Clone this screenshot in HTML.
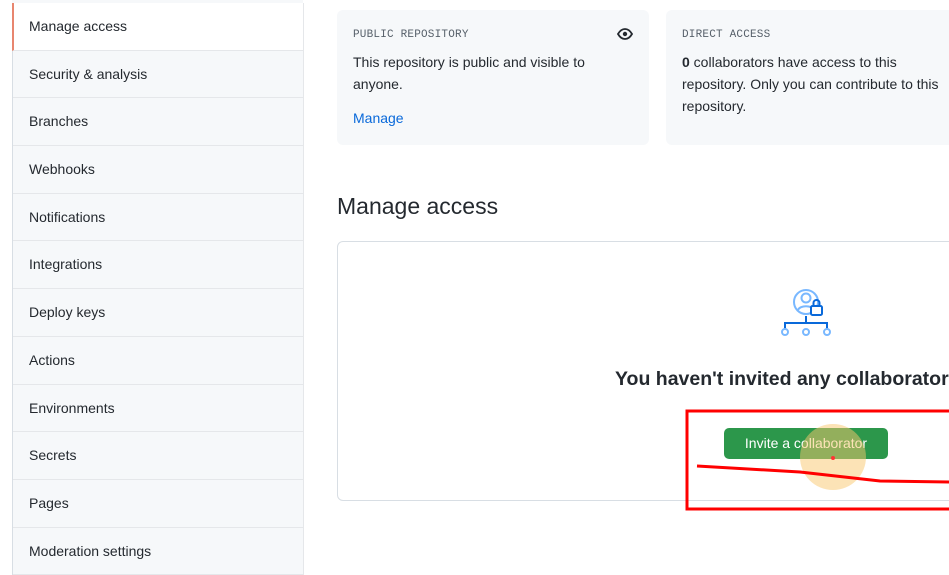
<!DOCTYPE html>
<html><head><meta charset="utf-8"><style>
body{margin:0;width:949px;height:561px;overflow:hidden;background:#fff;font-family:"Liberation Sans",sans-serif;color:#24292f;position:relative}
.side{position:absolute;left:12px;top:3px;width:290px;border-left:1px solid #d8dee4;border-right:1px solid #e5e7ea}
.it{border-bottom:1px solid #e5e7ea;background:#f6f8fa;font-size:14px;line-height:47px;padding-left:16px;box-sizing:border-box;height:47.7px}
.it.a{background:#fff;border-left:2px solid #e8866f;padding-left:15px;margin-left:-1px}
.top{position:absolute;left:12px;top:0;width:291px;height:3px;background:#f6f8fa}
.card{position:absolute;top:10px;height:135px;background:#f6f8fa;border-radius:6px;box-sizing:border-box;padding:19px 16px}
.lbl{font-family:"Liberation Mono",monospace;font-size:11px;color:#57606a;letter-spacing:0.2px}
.txt{font-size:14px;line-height:22px;margin-top:10px;color:#24292f}
h2{position:absolute;left:337px;top:193px;margin:0;font-weight:normal;font-size:23px}
.box{position:absolute;left:337px;top:241px;width:640px;height:260px;border:1px solid #d8dee4;border-radius:6px;box-sizing:border-box}
.msg{position:absolute;left:615px;top:368px;font-size:19.5px;font-weight:bold;white-space:nowrap}
.btn{position:absolute;left:724px;top:428px;width:164px;height:31px;background:#2c974b;border-radius:5px;color:#fff;font-size:14px;line-height:31px;text-align:center}
</style></head><body>
<div class="top"></div>
<div class="side">
<div class="it a">Manage access</div>
<div class="it">Security &amp; analysis</div>
<div class="it">Branches</div>
<div class="it">Webhooks</div>
<div class="it">Notifications</div>
<div class="it">Integrations</div>
<div class="it">Deploy keys</div>
<div class="it">Actions</div>
<div class="it">Environments</div>
<div class="it">Secrets</div>
<div class="it">Pages</div>
<div class="it">Moderation settings</div>
</div>
<div class="card" style="left:337px;width:312px">
<div class="lbl">PUBLIC REPOSITORY</div>
<svg style="position:absolute;right:16px;top:16px" width="16" height="16" viewBox="0 0 16 16"><path d="M1 8c2-3.5 4.5-5 7-5s5 1.5 7 5c-2 3.5-4.5 5-7 5S3 11.5 1 8z" fill="none" stroke="#24292f" stroke-width="1.8"/><circle cx="8" cy="8" r="2.2" fill="#24292f"/></svg>
<div class="txt" style="width:250px">This repository is public and visible to anyone.</div>
<div style="color:#0969da;font-size:14px;margin-top:15px">Manage</div>
</div>
<div class="card" style="left:666px;width:300px">
<div class="lbl">DIRECT ACCESS</div>
<div class="txt" style="white-space:nowrap"><b>0</b> collaborators have access to this<br>repository. Only you can contribute to this<br>repository.</div>
</div>
<h2>Manage access</h2>
<div class="box"></div>
<svg style="position:absolute;left:778px;top:286px" width="56" height="52" viewBox="0 0 56 52">
<circle cx="28" cy="16" r="12" fill="none" stroke="#79b8ff" stroke-width="2"/>
<circle cx="28" cy="12" r="4.5" fill="none" stroke="#79b8ff" stroke-width="2"/>
<path d="M20 24c2-5 14-5 16 0" fill="none" stroke="#79b8ff" stroke-width="2"/>
<rect x="33" y="20" width="11" height="9" rx="1.5" fill="#fff" stroke="#0969da" stroke-width="2"/>
<path d="M35.5 20v-3a3 3 0 0 1 6 0v3" fill="none" stroke="#0969da" stroke-width="2"/>
<path d="M7 43v-6h42v6M28 30v7" fill="none" stroke="#0969da" stroke-width="2"/>
<circle cx="7" cy="46" r="3" fill="none" stroke="#79b8ff" stroke-width="2"/>
<circle cx="28" cy="46" r="3" fill="none" stroke="#79b8ff" stroke-width="2"/>
<circle cx="49" cy="46" r="3" fill="none" stroke="#79b8ff" stroke-width="2"/>
</svg>
<div class="msg">You haven't invited any collaborators yet</div>
<div class="btn">Invite a collaborator</div>
<div style="position:absolute;left:800px;top:424px;width:66px;height:66px;border-radius:50%;background:rgba(250,200,110,0.5)"></div>
<div style="position:absolute;left:831px;top:456px;width:4px;height:4px;border-radius:50%;background:#f33"></div>
<svg style="position:absolute;left:0;top:0" width="949" height="561"><path d="M697 466 L800 472 L880 481 L949 482" fill="none" stroke="#f00" stroke-width="3"/><rect x="687" y="411" width="280" height="98" fill="none" stroke="#f00" stroke-width="3"/></svg>
</body></html>
